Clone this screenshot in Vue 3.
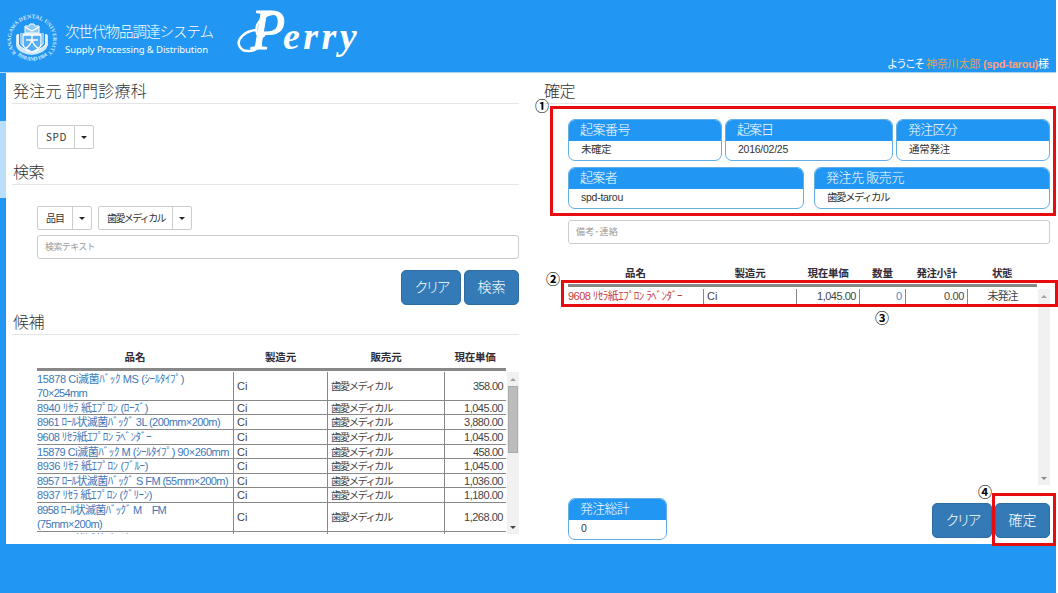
<script setup>
const fitText = (el, { value }) => {
  if (!value) return
  el.style.letterSpacing = '0px'
  const natural = el.getBoundingClientRect().width
  el.style.letterSpacing = '1px'
  const gaps = el.getBoundingClientRect().width - natural
  el.style.letterSpacing = gaps > 0 ? `${(value - natural) / gaps}px` : ''
}
const vFit = { mounted: fitText, updated: fitText }

const products = [
  { lines: [['15878 Ci滅菌ﾊﾞｯｸ MS (ｼｰﾙﾀｲﾌﾟ)', 147], ['70×254mm', 50]], price: '358.00', pw: 30 },
  { lines: [['8940 ﾘｾﾗ 紙ｴﾌﾟﾛﾝ (ﾛｰｽﾞ)', 111]], price: '1,045.00', pw: 39 },
  { lines: [['8961 ﾛｰﾙ状滅菌ﾊﾞｯｸﾞ 3L (200mm×200m)', 183]], price: '3,880.00', pw: 39 },
  { lines: [['9608 ﾘｾﾗ紙ｴﾌﾟﾛﾝ ﾗﾍﾞﾝﾀﾞｰ', 114]], price: '1,045.00', pw: 39 },
  { lines: [['15879 Ci滅菌ﾊﾞｯｸ M (ｼｰﾙﾀｲﾌﾟ) 90×260mm', 192]], price: '458.00', pw: 30 },
  { lines: [['8936 ﾘｾﾗ 紙ｴﾌﾟﾛﾝ (ﾌﾞﾙｰ)', 111]], price: '1,045.00', pw: 39 },
  { lines: [['8957 ﾛｰﾙ状滅菌ﾊﾞｯｸﾞ S FM (55mm×200m)', 191]], price: '1,036.00', pw: 39 },
  { lines: [['8937 ﾘｾﾗ 紙ｴﾌﾟﾛﾝ (ｸﾞﾘｰﾝ)', 115]], price: '1,180.00', pw: 39 },
  { lines: [['8958 ﾛｰﾙ状滅菌ﾊﾞｯｸﾞ M　FM', 129], ['(75mm×200m)', 65]], price: '1,268.00', pw: 39 },
  { lines: [['8959 ﾛｰﾙ状滅菌ﾊﾞｯｸﾞ L FM (100mm×200m)', 187]], price: '1,720.00', pw: 39 },
]
const topCards = [
  { title: '起案番号', tw: 50, value: '未確定', vw: 30 },
  { title: '起案日', tw: 36, value: '2016/02/25', vw: 50 },
  { title: '発注区分', tw: 49, value: '通常発注', vw: 41 },
]
const lowerCards = [
  { title: '起案者', tw: 37, value: 'spd-tarou', vw: 42 },
  { title: '発注先 販売元', tw: 78, value: '歯愛メディカル', vw: 62 },
]
</script>

<template>
  <div class="page">
    <header class="top">
      <svg class="emblem" width="52" height="54" viewBox="0 0 52 54">
        <defs>
          <path id="ring" d="M10.2 42.2 A21 21 0 1 1 41.8 42.2" />
          <path id="ringLow" d="M11 44 A23.6 23.6 0 0 0 42 44" />
        </defs>
        <text class="ring-text"><textPath href="#ring" textLength="96">KANAGAWA DENTAL UNIVERSITY</textPath></text>
        <text class="ring-text"><textPath href="#ringLow" textLength="33">1910 AND 1964</textPath></text>
        <path d="M10 24 V34 Q11 42 26 44 Q40 42 42 34 V24 L39 23 V33 Q37 39 26 40 Q15 39 13 33 V23Z" fill="#cfe8fc" />
        <path d="M12 23 V34 L23 41 M15 22 V33 L24 39 M40 23 V34 L29 41 M37 22 V33 L28 39" stroke="#fff" fill="none" stroke-width="1" />
        <path d="M17 23 H35 V34 Q34 38 26 41 Q18 38 17 34Z" fill="#55adf3" stroke="#fff" stroke-width="1.3" />
        <path d="M19 15 H23 L24 13 H28 L29 15 H33 V22 H19Z" fill="#8bc8f8" stroke="#fff" />
        <path d="M19 16 L26 20 L33 16 M17 24 H35 M26 24 V29 M20 29 H32 M26 29 Q24 35 20 37 M26 29 Q28 35 32 37" stroke="#fff" fill="none" stroke-width="1.4" />
      </svg>
      <div class="brand">
        <div class="brand-ja"><span v-fit="148">次世代物品調達システム</span></div>
        <div class="brand-en"><span v-fit="143">Supply Processing &amp; Distribution</span></div>
      </div>
      <div class="wordmark">
        <svg class="flourish" width="52" height="48" viewBox="0 0 52 48"><path d="M42 2 C27 0 17 12 20 21 C21 26 26 26 28 22 M19 18 C8 19 0 27 2 33 C5 42 19 40 24 33" fill="none" stroke="#fff" stroke-width="2.4" stroke-linecap="round" /></svg>
        <span class="logo"><span class="cap">P</span><span v-fit="77" class="low">erry</span></span>
      </div>
      <div class="welcome"><span v-fit="36">ようこそ</span><span v-fit="54" class="user ja">神奈川太郎</span><b v-fit="55" class="user">(spd-tarou)</b><span>様</span></div>
    </header>

    <div class="body">
      <div class="rail"><div class="rail-thumb"></div></div>

      <main class="left">
        <h2><span v-fit="134">発注元 部門診療科</span></h2>
        <div class="row dept">
          <div class="split"><span class="lab spd"><i v-fit="21">SPD</i></span><div class="arr"></div></div>
        </div>
        <h2><span v-fit="31">検索</span></h2>
        <div class="row filters">
          <div class="split"><span class="lab item"><i v-fit="18">品目</i></span><div class="arr"></div></div>
          <div class="split"><span class="lab vendor"><i v-fit="58">歯愛メディカル</i></span><div class="arr"></div></div>
        </div>
        <div class="input"><span v-fit="50">検索テキスト</span></div>
        <div class="actions">
          <button class="clear"><span v-fit="33">クリア</span></button>
          <button class="go"><span v-fit="28">検索</span></button>
        </div>
        <h2><span v-fit="31">候補</span></h2>

        <section class="candidates">
          <div class="cgrid chead"><b v-fit="21">品名</b><b v-fit="31">製造元</b><b v-fit="31">販売元</b><b v-fit="41">現在単価</b></div>
          <div class="rows">
            <div class="list">
              <div v-for="(p, i) in products" :key="i" class="cgrid crow" :class="{ tall: p.lines.length > 1 }">
                <div class="name"><div v-for="l in p.lines" :key="l[0]"><span v-fit="l[1]">{{ l[0] }}</span></div></div>
                <div class="cell"><span>Ci</span></div>
                <div class="cell"><span class="seller" v-fit="61">歯愛メディカル</span></div>
                <div class="cell num"><span v-fit="p.pw">{{ p.price }}</span></div>
              </div>
            </div>
            <div class="scroll on"><i class="up"></i><i class="thumb"></i><i class="down"></i></div>
          </div>
        </section>
      </main>

      <main class="right">
        <h2><span v-fit="31">確定</span></h2>
        <div class="cards three">
          <div v-for="c in topCards" :key="c.title" class="card">
            <div class="ct"><span v-fit="c.tw">{{ c.title }}</span></div>
            <div class="cv"><span v-fit="c.vw">{{ c.value }}</span></div>
          </div>
        </div>
        <div class="cards two">
          <div v-for="c in lowerCards" :key="c.title" class="card">
            <div class="ct"><span v-fit="c.tw">{{ c.title }}</span></div>
            <div class="cv"><span v-fit="c.vw">{{ c.value }}</span></div>
          </div>
        </div>
        <div class="input memo"><span v-fit="42">備考･連絡</span></div>
        <section class="order">
          <div class="ogrid ohead"><b v-fit="21">品名</b><b v-fit="31">製造元</b><b v-fit="41">現在単価</b><b v-fit="21">数量</b><b v-fit="40">発注小計</b><b v-fit="20">状態</b></div>
          <div class="rows">
            <div class="list">
              <div class="ogrid orow">
                <div class="red"><span v-fit="114">9608 ﾘｾﾗ紙ｴﾌﾟﾛﾝ ﾗﾍﾞﾝﾀﾞｰ</span></div>
                <div class="maker"><span>Ci</span></div>
                <div class="num"><span v-fit="39">1,045.00</span></div>
                <div class="num qty"><span>0</span></div>
                <div class="num"><span v-fit="20">0.00</span></div>
                <div class="state"><span v-fit="30">未発注</span></div>
              </div>
            </div>
            <div class="scroll"><i class="up"></i><i class="down"></i></div>
          </div>
        </section>
        <div class="bottom">
          <div class="card total"><div class="ct"><span v-fit="49">発注総計</span></div><div class="cv"><span>0</span></div></div>
          <div class="actions">
            <button class="clear"><span v-fit="33">クリア</span></button>
            <button class="go"><span v-fit="28">確定</span></button>
          </div>
        </div>
      </main>
    </div>
    <footer></footer>

    <div class="mark m1"></div><div class="mark m2"></div><div class="mark m4"></div>
    <b class="no n1">①</b><b class="no n2">②</b><b class="no n3">③</b><b class="no n4">④</b>
  </div>
</template>

<style>
body { margin: 0; background: #fff; overflow: hidden; }
</style>
<style scoped>
* { box-sizing: border-box; }
.page { position: relative; width: 1056px; height: 593px; background: #fff; color: #444; font: 11px/14px "Liberation Sans", "Noto Sans CJK JP", sans-serif; }
span, b, i { white-space: pre; }
i { font-style: normal; }
span, b, .lab i { display: inline-block; }
.top { height: 73px; background: #2196f3; border-bottom: 1px solid #a9d5f8; display: flex; color: #fff; }
.emblem { margin: 11px 0 0 6px; flex: none; }
.ring-text { font: bold 5.6px "Liberation Serif", serif; fill: #d4ebfd; }
.brand { margin-left: 7px; width: 172px; padding-top: 21px; }
.brand-ja { font: 300 14.5px/20px "Noto Sans CJK JP", sans-serif; }
.brand-en { font: 9.5px/14px "Noto Sans", sans-serif; margin-top: 2px; }
.wordmark { position: relative; width: 140px; padding-left: 14px; font: italic bold 38px/72px "Liberation Serif", serif; height: 72px; }
.logo { height: 72px; }
.cap { font-size: 56px; font-weight: normal; line-height: 60px; width: 32px; -webkit-text-stroke: 1px #fff; }
.flourish { position: absolute; left: 0; top: 12px; }
.welcome { margin-left: auto; padding-right: 7px; align-self: flex-end; display: flex; line-height: 16px; font-size: 11px; }
.user { color: #ffa07a; margin-left: 3px; }
.user.ja { color: #d8a35c; }
.body { display: flex; height: 471px; }
.rail { width: 6px; background: #2196f3; padding-top: 48px; flex: none; }
.rail-thumb { height: 77px; background: #bbdefb; }
h2 { margin: 0; font: 300 16px/20px "Noto Sans CJK JP", sans-serif; color: #333; border-bottom: 1px solid #e5e5e5; height: 24px; padding-left: 1px; }
.left { width: 507px; margin-left: 6px; padding-top: 7px; flex: none; }
.row { display: flex; padding-left: 25px; }
.dept { padding-top: 21px; height: 57px; }
.filters { padding-top: 21px; height: 50px; gap: 6px; }
.split { display: flex; height: 24px; border: 1px solid #ccc; border-radius: 2px; color: #333; }
.lab { border-right: 1px solid #ccc; line-height: 21px; padding-left: 8px; font-size: 10px; font-family: "Noto Sans CJK JP", sans-serif; }
.spd { width: 37px; } .item { width: 35px; } .vendor { width: 74px; }
.arr { width: 18px; display: flex; align-items: center; justify-content: center; }
.arr::after { content: ""; border: 3px solid transparent; border-top-color: #222; border-bottom: 0; margin-top: 1px; }
.input { height: 24px; border: 1px solid #ccc; border-radius: 3px; color: #999; line-height: 22px; padding-left: 7px; font-size: 9px; font-family: "Noto Sans CJK JP", sans-serif; }
.left .input { margin: 0 0 11px 25px; }
.actions { display: flex; gap: 3px; justify-content: flex-end; }
button { height: 35px; padding: 0 0 3px; border: 1px solid #2e6da4; border-radius: 5px; background: #337ab7; color: #fff; font: 300 14px/20px "Noto Sans CJK JP", sans-serif; }
.clear { width: 60px; } .go { width: 55px; }
.left > .actions { margin-bottom: 6px; }
.candidates { margin: 15px 0 0 25px; }
.cgrid { display: grid; grid-template-columns: 197px 94px 117px 61px; width: 469px; }
.chead { height: 21px; border-bottom: 3px solid #888; justify-items: center; line-height: 14px; }
.chead b, .ohead b { font-size: 10.5px; color: #322c38; margin-left: -1px; }
.rows { display: flex; }
.candidates .rows { height: 162px; margin-top: 1px; overflow: hidden; width: 482px; }
.list { flex: none; width: 469px; }
.crow { height: 14.65px; border-bottom: 1px solid #888; }
.crow.tall { height: 28.6px; }
.crow > div { border-right: 1px solid #888; display: flex; align-items: center; line-height: 13.6px; padding: 1px 0 0 3px; }
.crow > .name { color: #3d77b8; flex-direction: column; align-items: flex-start; justify-content: center; padding-left: 0; }
.crow > .num { border-right: 0; padding-right: 3px; }
.name > div { height: 13.6px; }
.seller { font-size: 10.3px; }
.num { display: flex; justify-content: flex-end; }
.scroll { background: #f1f1f1; width: 12px; margin-left: 1px; display: flex; flex-direction: column; align-items: center; padding: 6px 0 5px; }
.up { border: 3px solid transparent; border-bottom-color: #a3a3a3; border-top: 0; }
.down { border: 3px solid transparent; border-top-color: #888; border-bottom: 0; margin-top: auto; }
.on .down { border-top-color: #444; }
.thumb { width: 10px; height: 67px; background: #bcbcbc; border: 1px solid #aaa; margin-top: 5px; }
.right { width: 507px; margin-left: 24px; padding-top: 7px; flex: none; }
.cards { display: grid; margin-left: 25px; }
.three { grid-template-columns: 154px 168px 154px; gap: 3px; margin-top: 15px; }
.two { grid-template-columns: 236px 236px; gap: 10px; margin-top: 6px; }
.card { height: 42px; border: 1px solid #63aee3; border-radius: 7px; overflow: hidden; background: #fff; }
.ct { background: #2196f3; color: #fff; height: 21px; padding-left: 11px; font: 300 13px/18px "Noto Sans CJK JP", sans-serif; }
.cv { padding-left: 12px; line-height: 16px; font-size: 10.5px; color: #333; }
.memo { margin: 11px 0 0 25px; width: 482px; }
.order { margin: 23px 0 0 25px; width: 482px; }
.ogrid { display: grid; grid-template-columns: 136px 93px 63px 46px 62px 69px; width: 469px; }
.ohead { height: 20px; border-bottom: 3px solid #888; justify-items: center; line-height: 13px; }
.order .rows { height: 196px; margin-top: 2px; }
.orow { height: 15px; }
.orow > div { border-right: 1px solid #888; line-height: 15px; }
.orow > .num { padding-right: 3px; }
.red { color: #c43c3c; } .maker { padding-left: 3px; } .qty { color: #3c8fd0; }
.orow > .state { border: 0; text-align: center; }
.bottom { margin: 13px 0 0 25px; display: flex; justify-content: space-between; width: 482px; }
.total { width: 99px; }
.bottom .actions { padding-top: 5px; }
footer { height: 49px; background: #2196f3; }
.mark { position: absolute; border: 3px solid #e60c10; }
.m1 { left: 550px; top: 106px; width: 506px; height: 110px; }
.m2 { left: 561px; top: 280px; width: 497px; height: 27px; }
.m4 { left: 992px; top: 493px; width: 64px; height: 53px; }
.no { position: absolute; width: 16px; height: 16px; text-align: center; font: 700 14px/16px "Noto Sans CJK JP", sans-serif; color: #000; }
.n1 { left: 534px; top: 97px; } .n2 { left: 545px; top: 270px; } .n3 { left: 874px; top: 309px; } .n4 { left: 977px; top: 483px; }
</style>
